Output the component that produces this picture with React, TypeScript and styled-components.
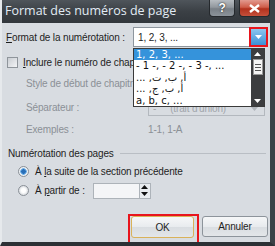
import React from "react";
import styled, { createGlobalStyle } from "styled-components";

const GlobalStyle = createGlobalStyle`
  html, body { margin: 0; padding: 0; background: #ffffff; }
  body { font-family: "Liberation Sans", "DejaVu Sans", sans-serif; }
`;

const FONT = `"Liberation Sans", "DejaVu Sans", sans-serif`;

const Window = styled.div`
  width: 275px;
  height: 246px;
  box-sizing: border-box;
  display: flex;
  flex-direction: column;
  background: #d8dce1;
  border-right: 5px solid #3b4046;
  border-bottom: 4px solid #2c3035;
  border-left: 2px solid #e6e9ec;
  overflow: hidden;
  font-family: ${FONT};
  font-size: 10px;
  letter-spacing: -0.15px;
  color: #1e1e1e;
`;

const TitleBar = styled.div`
  height: 23px;
  flex: none;
  display: flex;
  align-items: flex-start;
  justify-content: space-between;
  background: linear-gradient(#4f555b 0%, #3b4045 50%, #32373c 100%);
  margin-left: -2px;
  padding-left: 5px;
`;

const Title = styled.div`
  font-family: "Open Sans", ${FONT};
  font-size: 12.5px;
  letter-spacing: 0;
  line-height: 22px;
  color: #e2ecf5;
`;

const TitleButtons = styled.div`
  display: flex;
  gap: 4px;
`;

const CaptionButton = styled.div<{ $red?: boolean; $w: number }>`
  width: ${({ $w }) => $w}px;
  height: 17px;
  box-sizing: border-box;
  border: 1px solid #25292d;
  border-top: none;
  border-radius: 0 0 4px 4px;
  background: ${({ $red }) =>
    $red
      ? "linear-gradient(#e29a8f 0%, #cf5d4a 45%, #b2311d 55%, #c4503b 100%)"
      : "linear-gradient(#b7bcc1 0%, #92989e 45%, #787f86 55%, #8c939a 100%)"};
  display: flex;
  align-items: center;
  justify-content: center;
  color: #ffffff;
  font-weight: bold;
  font-size: 12px;
  text-shadow: 0 0 2px #333, 0 0 1px #333;
`;

const Body = styled.div`
  flex: 1;
  display: flex;
  flex-direction: column;
  padding: 4px 0 0 4px;
`;

const TopRow = styled.div`
  display: flex;
  align-items: center;
  height: 20px;
`;

const Label = styled.span<{ $muted?: boolean }>`
  color: ${({ $muted }) => ($muted ? "#8b9096" : "#1e1e1e")};
  white-space: nowrap;
  u { text-decoration: underline; }
`;

const TopLabel = styled(Label)`
  width: 127px;
`;

const ComboWrap = styled.div`
  position: relative;
  width: 135px;
  height: 20px;
`;

const Combo = styled.div`
  height: 100%;
  box-sizing: border-box;
  border: 1px solid #8e969e;
  background: #ffffff;
  display: flex;
  align-items: center;
  padding-left: 4px;
`;

const DropButton = styled.div`
  position: absolute;
  right: 0;
  top: 0;
  width: 19px;
  height: 20px;
  box-sizing: border-box;
  border: 2px solid #e8141c;
  background: linear-gradient(#8cc6ef, #3b8fd6);
  display: flex;
  align-items: center;
  justify-content: center;
`;

const DropList = styled.div`
  position: absolute;
  left: 0;
  top: 21px;
  width: 132px;
  height: 59px;
  box-sizing: border-box;
  border: 1px solid #3a3a3a;
  background: #ffffff;
  display: flex;
  z-index: 5;
`;

const Items = styled.div`
  flex: 1;
  display: flex;
  flex-direction: column;
`;

const Item = styled.div<{ $selected?: boolean; $rtl?: boolean }>`
  height: 11.4px;
  line-height: 11px;
  padding-left: 2px;
  white-space: nowrap;
  color: ${({ $selected }) => ($selected ? "#ffffff" : "#111111")};
  background: ${({ $selected }) => ($selected ? "#3593db" : "transparent")};
  direction: ${({ $rtl }) => ($rtl ? "rtl" : "ltr")};
  text-align: left;
  font-family: "DejaVu Sans", ${FONT};
  font-size: 10px;
  letter-spacing: 0;
`;

const ScrollBar = styled.div`
  width: 13px;
  background: #3c3d3f;
  display: flex;
  flex-direction: column;
  align-items: center;
  padding-top: 3px;
  gap: 3px;
`;

const Thumb = styled.div`
  width: 10px;
  height: 16px;
  box-sizing: border-box;
  background: #f4f4f4;
  border: 1px solid #999;
  display: flex;
  flex-direction: column;
  justify-content: center;
  gap: 2px;
  align-items: center;
  span { display: block; width: 6px; height: 1px; background: #555; }
`;

const Spacer = styled.div`
  flex: 1;
`;

const CheckRow = styled.div`
  display: flex;
  align-items: center;
  gap: 5px;
  height: 20px;
  margin-top: 5px;
  padding-left: 1px;
`;

const CheckBox = styled.div`
  width: 11px;
  height: 11px;
  box-sizing: border-box;
  border: 1px solid #8f959b;
  background: linear-gradient(135deg, #c9cdd2, #f3f4f6);
`;

const Grid = styled.div`
  display: grid;
  grid-template-columns: 122px 1fr;
  grid-template-rows: 22px 26px 18px;
  align-items: center;
  padding-left: 20px;
`;

const MutedCombo = styled.div`
  position: relative;
  height: 14px;
  width: 117px;
  margin-top: 3px;
  box-sizing: border-box;
  border: 1px solid #b3b8be;
  background: #d8dce1;
  color: #a0a5ab;
  display: flex;
  align-items: center;
  padding-left: 4px;
  gap: 14px;
  svg { position: absolute; right: 6px; top: 4px; }
`;

const Group = styled.div`
  display: flex;
  align-items: center;
  gap: 6px;
  height: 18px;
  margin-top: 6px;
  padding-left: 2px;
  &::after {
    content: "";
    flex: 1;
    height: 1px;
    background: #b9bec4;
    margin-right: 4px;
  }
`;

const RadioRow = styled.div`
  display: flex;
  align-items: center;
  gap: 6px;
  height: 19px;
  padding-left: 12px;
`;

const Radio = styled.div<{ $on?: boolean }>`
  width: 11px;
  height: 11px;
  box-sizing: border-box;
  border-radius: 50%;
  border: 1px solid #8a9097;
  background: ${({ $on }) =>
    $on
      ? "radial-gradient(circle, #2a6fb7 0 2px, #6fb0e8 2.5px 3px, #eef1f4 3.5px)"
      : "radial-gradient(circle, #ffffff 0 2px, #d4d8dc 5px)"};
`;

const Spinner = styled.div`
  margin-left: 2px;
  width: 58px;
  height: 16px;
  box-sizing: border-box;
  border: 1px solid #adb3b9;
  background: #f4f5f7;
  display: flex;
  justify-content: flex-end;
`;

const SpinArrows = styled.div`
  width: 10px;
  display: flex;
  flex-direction: column;
  justify-content: space-around;
  align-items: center;
  border-left: 1px solid #adb3b9;
  background: #e9ecef;
`;

const Footer = styled.div`
  display: flex;
  justify-content: flex-end;
  gap: 8px;
  margin-top: 16px;
  padding-right: 2px;
`;

const Button = styled.div<{ $marked?: boolean }>`
  width: ${({ $marked }) => ($marked ? 63 : 66)}px;
  height: ${({ $marked }) => ($marked ? 22 : 21)}px;
  box-sizing: border-box;
  border: 1px solid ${({ $marked }) => ($marked ? "#d9b25a" : "#8d949b")};
  border-radius: 3px;
  background: linear-gradient(#f6f7f8 0%, #e8ebee 50%, #d9dde1 51%, #e3e6e9 100%);
  display: flex;
  align-items: center;
  justify-content: center;
  color: #1e1e1e;
  position: relative;
  ${({ $marked }) =>
    $marked &&
    `&::before {
      content: "";
      position: absolute;
      left: -4px;
      top: -3px;
      right: -6px;
      bottom: -7px;
      border: 2px solid #e8141c;
    }`}
`;

const Arrow = ({ up, color }: { up?: boolean; color: string }) => (
  <svg width="7" height="4" viewBox="0 0 7 4">
    <path d={up ? "M0 4 H7 L3.5 0 Z" : "M0 0 H7 L3.5 4 Z"} fill={color} />
  </svg>
);

const App = () => {
  return (
    <>
      <GlobalStyle />
      <Window>
        <TitleBar>
          <Title>Format des numéros de page</Title>
          <TitleButtons>
            <CaptionButton $w={26}>?</CaptionButton>
            <CaptionButton $w={31} $red>
              <svg width="11" height="9" viewBox="0 0 11 9">
                <path d="M1 1 L10 8 M10 1 L1 8" stroke="#ffffff" strokeWidth="2.4" />
              </svg>
            </CaptionButton>
          </TitleButtons>
        </TitleBar>
        <Body>
          <TopRow>
            <TopLabel>
              <u>F</u>ormat de la numérotation :
            </TopLabel>
            <ComboWrap>
              <Combo>1, 2, 3, ...</Combo>
              <DropButton>
                <Arrow color="#ffffff" />
              </DropButton>
              <DropList>
                <Items>
                  <Item $selected>1, 2, 3, ...</Item>
                  <Item>- 1 -, - 2 -, - 3 -, ...</Item>
                  <Item $rtl>أ, ب, ت, ...</Item>
                  <Item $rtl>أ, ب, ج, ...</Item>
                  <Item>a, b, c, ...</Item>
                </Items>
                <ScrollBar>
                  <Arrow up color="#ffffff" />
                  <Thumb>
                    <span />
                    <span />
                    <span />
                  </Thumb>
                  <Spacer />
                  <Arrow color="#ffffff" />
                  <span />
                </ScrollBar>
              </DropList>
            </ComboWrap>
          </TopRow>
          <CheckRow>
            <CheckBox />
            <Label>
              <u>I</u>nclure le numéro de chapitre
            </Label>
          </CheckRow>
          <Grid>
            <Label $muted>Style de début de chapitre :</Label>
            <span />
            <Label $muted>Séparateur :</Label>
            <MutedCombo>
              <span>-</span>
              <span>(trait d'union)</span>
              <Arrow color="#b0b5bb" />
            </MutedCombo>
            <Label $muted>Exemples :</Label>
            <Label $muted>1-1, 1-A</Label>
          </Grid>
          <Group>Numérotation des pages</Group>
          <RadioRow>
            <Radio $on />
            <Label>
              À <u>l</u>a suite de la section précédente
            </Label>
          </RadioRow>
          <RadioRow>
            <Radio />
            <Label>
              À <u>p</u>artir de :
            </Label>
            <Spinner>
              <SpinArrows>
                <Arrow up color="#111111" />
                <Arrow color="#111111" />
              </SpinArrows>
            </Spinner>
          </RadioRow>
          <Footer>
            <Button $marked>OK</Button>
            <Button>Annuler</Button>
          </Footer>
        </Body>
      </Window>
    </>
  );
};

export default App;
